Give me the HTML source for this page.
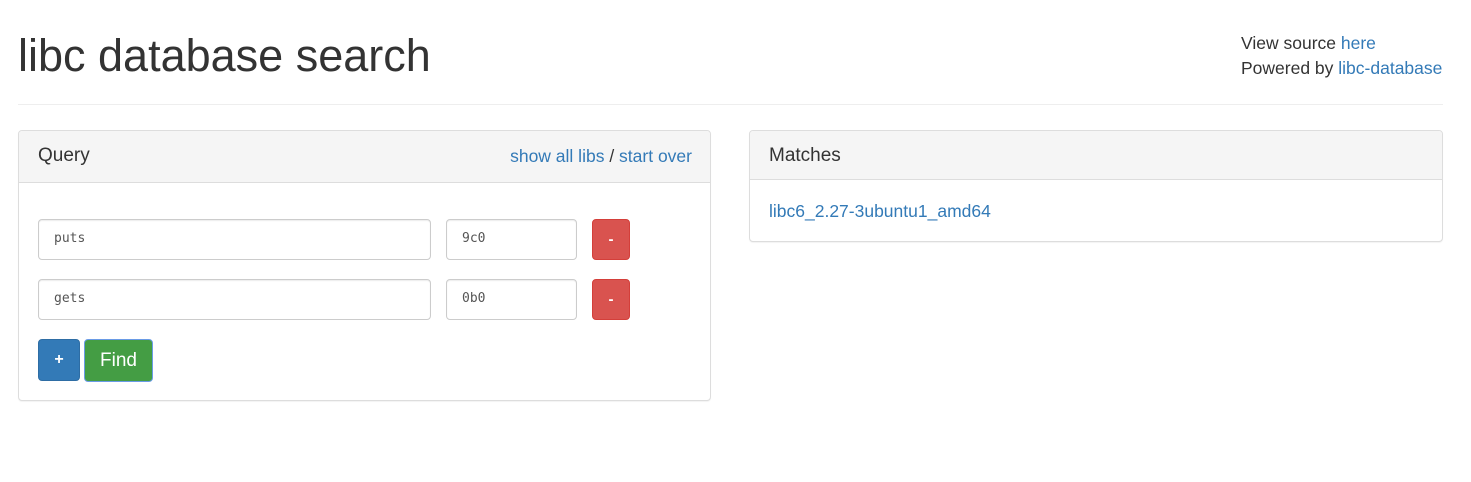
<!DOCTYPE html>
<html><head><style>
body{margin:0;width:1471px;height:482px;background:#fff;font-family:"Liberation Sans",sans-serif;color:#333;position:relative;overflow:hidden}
.a{position:absolute}
a{color:#337ab7;text-decoration:none}
.panel{position:absolute;border:1px solid #ddd;border-radius:4px;background:#fff;box-shadow:0 1px 1px rgba(0,0,0,.05)}
.ph{background:#f5f5f5;border-bottom:1px solid #ddd;border-radius:3px 3px 0 0;position:absolute;left:0;right:0;top:0}
.in{position:absolute;border:1px solid #ccc;border-radius:4px;height:41px;box-sizing:border-box;font-family:"DejaVu Sans Mono","Liberation Mono",monospace;font-size:13px;color:#555;padding:10px 15px;line-height:18px;box-shadow:inset 0 1px 1px rgba(0,0,0,.075)}
.btn{position:absolute;border-radius:4px;color:#fff;text-align:center;box-sizing:border-box;font-weight:bold}
</style></head><body>
<div class="a" style="left:18px;top:28px;font-size:45px;line-height:56px">libc database search</div>
<div class="a" style="left:1241px;top:31px;font-size:17.5px;line-height:25px">View source <a>here</a><br>Powered by <a>libc-database</a></div>
<div class="a" style="left:18px;right:28px;top:104px;border-top:1px solid #eee"></div>

<div class="panel" style="left:18px;top:130px;width:691px;height:269px">
 <div class="ph" style="height:51px">
  <div class="a" style="left:19px;top:14px;font-size:19px">Query</div>
  <div class="a" style="right:18px;top:15px;font-size:17.5px"><a>show all libs</a> / <a>start over</a></div>
 </div>
 <div class="in" style="left:19px;top:88px;width:393px">puts</div>
 <div class="in" style="left:427px;top:88px;width:131px">9c0</div>
 <div class="btn" style="left:573px;top:88px;width:38px;height:41px;background:#d9534f;border:1px solid #d43f3a;line-height:39px;font-size:15px">-</div>
 <div class="in" style="left:19px;top:148px;width:393px">gets</div>
 <div class="in" style="left:427px;top:148px;width:131px">0b0</div>
 <div class="btn" style="left:573px;top:148px;width:38px;height:41px;background:#d9534f;border:1px solid #d43f3a;line-height:39px;font-size:15px">-</div>
 <div class="btn" style="left:19px;top:208px;width:42px;height:42px;background:#337ab7;border:1px solid #2e6da4;line-height:40px;font-size:16px">+</div>
 <div class="btn" style="left:65px;top:208px;width:69px;height:43px;background:#449d44;border:1px solid #6a9be6;line-height:41px;font-size:19px;font-weight:normal">Find</div>
</div>

<div class="panel" style="left:749px;top:130px;width:692px;height:110px">
 <div class="ph" style="height:48px">
  <div class="a" style="left:19px;top:14px;font-size:19px">Matches</div>
 </div>
 <div class="a" style="left:19px;top:70px;font-size:17.5px"><a>libc6_2.27-3ubuntu1_amd64</a></div>
</div>
</body></html>
